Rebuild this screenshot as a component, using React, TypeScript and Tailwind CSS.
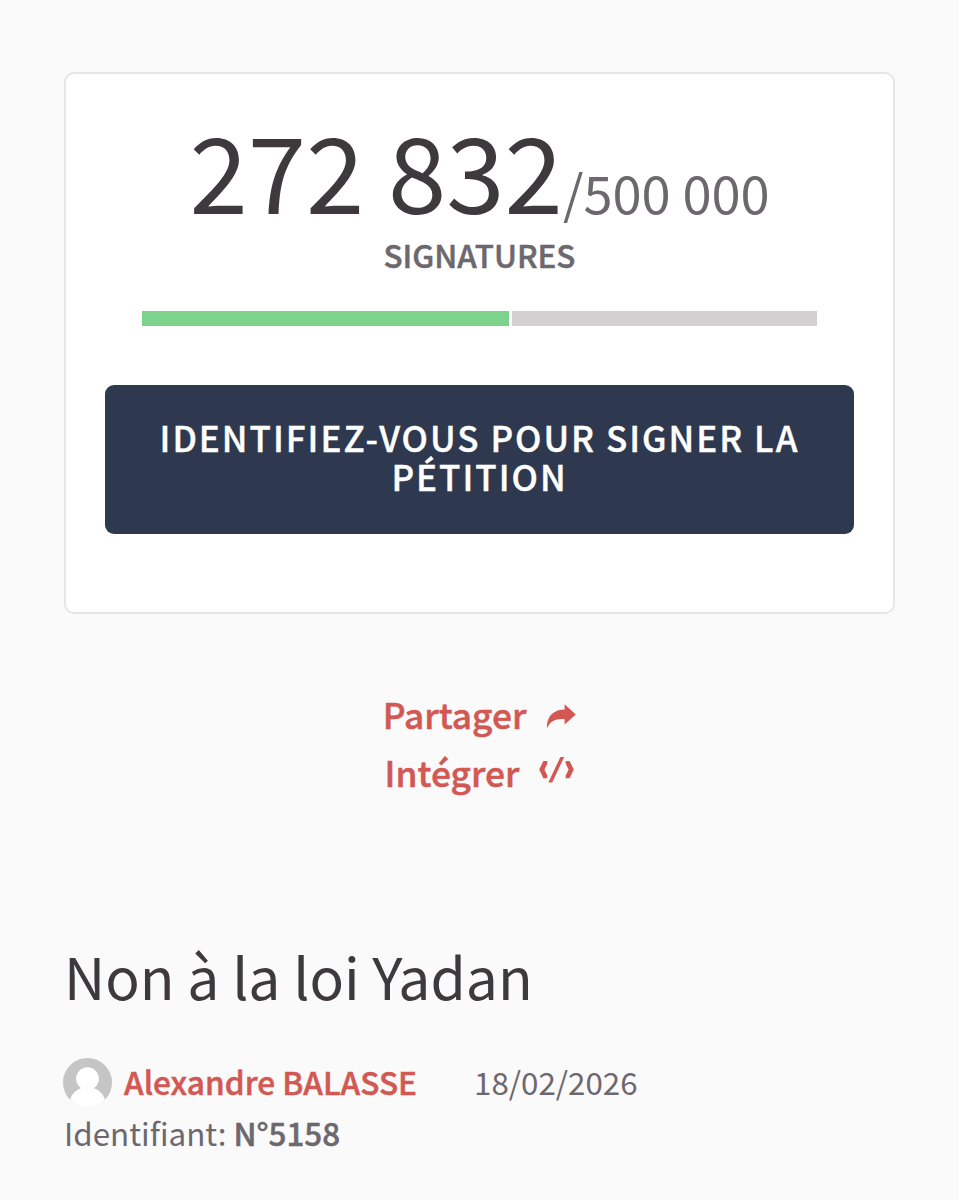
import React from "react";

const signatures = 272832;
const goal = 500000;

const ShareIcon = () => (
  <svg width="30" height="25" viewBox="0 0 30 25" fill="currentColor">
    <path d="M18.6 0.3 29.8 10.5 18.6 20.6V15.2C10 14.4 4 17 0.9 24.5 0.3 12.5 7.5 5.6 18.6 5.5Z" />
  </svg>
);

const CodeIcon = () => (
  <svg width="35" height="26" viewBox="0 0 35 26" fill="currentColor">
    <path d="M4.4 4H8.3V6.8L5.4 12.600 8.3 18.400V21.200H4.4L0.2 12.600Z" />
    <path d="M30.600 4H26.7V6.800L29.6 12.600 26.7 18.400V21.200H30.600L34.8 12.600Z" />
    <path d="M21.4 0H25.200L13.200 25.4H9.400Z" />
  </svg>
);

const Avatar = () => (
  <svg width="49" height="49" viewBox="0 0 49 49">
    <clipPath id="round">
      <circle cx="24.5" cy="24.5" r="24.5" />
    </clipPath>
    <g clipPath="url(#round)">
      <rect width="49" height="49" fill="#c5c5c5" />
      <circle cx="24.5" cy="20.7" r="11.4" fill="#fff" />
      <ellipse cx="24.5" cy="46" rx="18" ry="17" fill="#fff" />
      <path d="M0 44H49V49H0Z" fill="#fff" />
    </g>
  </svg>
);

const App = () => {
  return (
    <main className="min-h-[1200px] bg-[#fafafa] px-16 pt-[72px] font-['Noto_Sans_CJK_SC',sans-serif] text-[#6d686e]">
      <section className="h-[542px] w-[831px] rounded-[10px] border-2 border-[#e6e6e6] bg-white px-[39px] pt-[42px]">
        <div className="flex h-[104px] items-baseline justify-center whitespace-nowrap text-[105.1px] leading-[104px] text-[#3d393c]">
          272 832
          <span className="text-[52.4px] leading-[60px] text-[#6d686e]">
            /500 000
          </span>
        </div>
        <div className="mt-[19px] text-center text-[31.4px] leading-8 font-medium [-webkit-text-stroke:0.5px]">
          SIGNATURES
        </div>
        <div className="mx-[37px] mt-10 flex h-[15px] gap-[3px]">
          <div
            className="bg-[#7cd38b]"
            style={{ width: `${(signatures / goal) * 100 - 0.2}%` }}
          />
          <div className="flex-1 bg-[#d4d0d2]" />
        </div>
        <button className="mt-[59px] block h-[149px] w-full rounded-[9px] bg-[#2e384f] px-10 pb-[8px] text-center text-[35px] leading-[39px] font-medium tracking-[2px] text-white [-webkit-text-stroke:0.4px]">
          IDENTIFIEZ-VOUS POUR SIGNER LA PÉTITION
        </button>
      </section>

      <section className="mt-[71px] flex flex-col items-center text-[35.3px] leading-[58px] font-medium text-[#d25854]">
        <a
          href="#"
          className="flex h-[58px] items-center gap-[20px] [-webkit-text-stroke:0.5px]"
        >
          Partager
          <span className="mt-[4px]">
            <ShareIcon />
          </span>
        </a>
        <a
          href="#"
          className="flex h-[58px] items-center gap-[20px] [-webkit-text-stroke:0.5px]"
        >
          Intégrer
          <span className="mb-[5px]">
            <CodeIcon />
          </span>
        </a>
      </section>

      <h1 className="mt-[139px] text-[57px] leading-[70px] text-[#3d393c]">
        Non à la loi Yadan
      </h1>

      <div className="mt-[46px] flex h-[51px] items-center text-[31.4px] leading-[51px]">
        <div className="-ml-px mt-[2px]">
          <Avatar />
        </div>
        <a
          href="#"
          className="ml-3 text-[31.6px] font-medium text-[#d25854] [-webkit-text-stroke:0.5px]"
        >
          Alexandre BALASSE
        </a>
        <span className="ml-[57px] text-[31.3px]">18/02/2026</span>
      </div>
      <p className="text-[31.4px] leading-[51px]">
        Identifiant:{" "}
        <span className="font-medium [-webkit-text-stroke:0.5px]">N°5158</span>
      </p>
    </main>
  );
};

export default App;
